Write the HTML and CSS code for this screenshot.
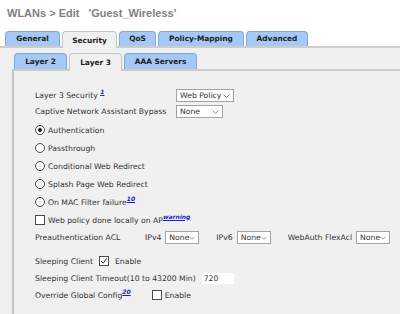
FILE: index.html
```html
<!DOCTYPE html>
<html lang="en">
<head>
    <meta charset="UTF-8">
    <title>WLANs &gt; Edit</title>
    <link rel="stylesheet" href="styles.css">
</head>
<body>
    <div class="title">WLANs &gt; Edit &nbsp;&nbsp;'Guest_Wireless'</div>

    <div class="tabs outer">
        <span class="tab t-general">General</span>
        <span class="tab t-security active">Security</span>
        <span class="tab t-qos">QoS</span>
        <span class="tab t-policy">Policy-Mapping</span>
        <span class="tab t-advanced">Advanced</span>
    </div>

    <div class="panel">
        <div class="tabs inner">
            <span class="tab t-layer">Layer 2</span>
            <span class="tab t-layer active">Layer 3</span>
            <span class="tab t-aaa">AAA Servers</span>
        </div>

        <div class="content">
            <div class="row r-sel">
                <span class="label wide">Layer 3 Security <sup class="ref">1</sup></span>
                <span class="select w-web">Web Policy <svg class="chev" width="7" height="4" viewBox="0 0 7 4"><path d="M0.5 0.5 L3.5 3.5 L6.5 0.5" fill="none" stroke="#8a8a8a"/></svg></span>
            </div>
            <div class="row r-sel">
                <span class="label wide">Captive Network Assistant Bypass</span>
                <span class="select w-none">None <svg class="chev" width="7" height="4" viewBox="0 0 7 4"><path d="M0.5 0.5 L3.5 3.5 L6.5 0.5" fill="none" stroke="#8a8a8a"/></svg></span>
            </div>

            <div class="row r-opt first">
                <span class="radio on"></span>
                <span>Authentication</span>
            </div>
            <div class="row r-opt">
                <span class="radio"></span>
                <span>Passthrough</span>
            </div>
            <div class="row r-opt">
                <span class="radio"></span>
                <span>Conditional Web Redirect</span>
            </div>
            <div class="row r-opt">
                <span class="radio"></span>
                <span>Splash Page Web Redirect</span>
            </div>
            <div class="row r-opt">
                <span class="radio"></span>
                <span>On MAC Filter failure<sup class="ref">10</sup></span>
            </div>
            <div class="row r-opt">
                <span class="check"></span>
                <span>Web policy done locally on AP<sup class="ref">warning</sup></span>
            </div>

            <div class="row r-sel acl">
                <span class="label acl-label">Preauthentication ACL</span>
                <span class="acl-name">IPv4</span>
                <span class="select w-acl">None <svg class="chev" width="7" height="4" viewBox="0 0 7 4"><path d="M0.5 0.5 L3.5 3.5 L6.5 0.5" fill="none" stroke="#8a8a8a"/></svg></span>
                <span class="acl-name gap">IPv6</span>
                <span class="select w-acl">None <svg class="chev" width="7" height="4" viewBox="0 0 7 4"><path d="M0.5 0.5 L3.5 3.5 L6.5 0.5" fill="none" stroke="#8a8a8a"/></svg></span>
                <span class="acl-name gap">WebAuth FlexAcl</span>
                <span class="select w-acl">None <svg class="chev" width="7" height="4" viewBox="0 0 7 4"><path d="M0.5 0.5 L3.5 3.5 L6.5 0.5" fill="none" stroke="#8a8a8a"/></svg></span>
            </div>

            <div class="row r-opt sleep">
                <span class="label">Sleeping Client</span>
                <span class="check on"><svg width="8" height="8" viewBox="0 0 8 8"><path d="M1.2 4.2 L3.2 6.2 L6.8 1.4" fill="none" stroke="#333" stroke-width="1"/></svg></span>
                <span>Enable</span>
            </div>
            <div class="row r-sel">
                <span class="label">Sleeping Client Timeout(10 to 43200 Min)</span>
                <span class="textbox">720</span>
            </div>
            <div class="row r-opt">
                <span class="label">Override Global Config<sup class="ref">20</sup></span>
                <span class="check override"></span>
                <span>Enable</span>
            </div>
        </div>
    </div>
</body>
</html>
```

FILE: styles.css
```css
body {
    margin: 0;
    background: white;
    font-family: "DejaVu Sans", Verdana, sans-serif;
    font-size: 7.7px;
    color: #333;
}
.title {
    height: 31px;
    line-height: 26px;
    padding-left: 7px;
    font-family: "Liberation Sans", Arial, sans-serif;
    font-size: 11px;
    font-weight: bold;
    color: #7f7f7f;
    white-space: pre;
}
.tabs {
    display: flex;
    gap: 2px;
    align-items: flex-end;
}
.tabs.outer {
    padding-left: 5px;
    border-bottom: 2px solid #cdcdcd;
}
.tab {
    box-sizing: border-box;
    height: 15px;
    line-height: 14px;
    text-align: center;
    border: 1px solid #7ea8e2;
    border-bottom: none;
    border-radius: 4px 4px 0 0;
    background: #a6c8f4;
    font-weight: bold;
    font-size: 7.4px;
    color: #1c1c1c;
}
.tab.active {
    height: 17px;
    line-height: 17px;
    margin-bottom: -2px;
    background: #f0f0f0;
    border-color: #c6c6c6;
}
.t-general,
.t-security {
    width: 55px;
}
.t-qos {
    width: 37px;
}
.t-policy {
    width: 86px;
}
.t-advanced {
    width: 62px;
}
.t-layer {
    width: 53px;
}
.t-aaa {
    width: 73px;
}
.panel {
    background: #f0f0f0;
    padding: 5px 0 0 12px;
    height: 266px;
}
.tabs.inner {
    padding-left: 2px;
}
.tabs.inner .tab {
    height: 16px;
    line-height: 16px;
}
.tabs.inner .tab.active {
    height: 18px;
    line-height: 18px;
}
.content {
    border-top: 2px solid #cccccc;
    border-left: 2px solid #c4c4c4;
    padding: 16px 0 0 21px;
    height: 230px;
}
.row {
    display: flex;
    align-items: center;
    white-space: nowrap;
}
.r-sel {
    height: 16px;
}
.r-opt {
    height: 18px;
}
.r-opt.first {
    margin-top: 2px;
}
.label.wide {
    width: 141px;
}
.ref {
    font-size: 6px;
    font-weight: bold;
    font-style: italic;
    color: #1a1ad0;
    text-decoration: underline;
    vertical-align: 4px;
    line-height: 0;
}
.select {
    display: flex;
    align-items: center;
    justify-content: space-between;
    box-sizing: border-box;
    height: 13px;
    padding: 0 3px 0 3px;
    background: white;
    border: 1px solid #a3a3a3;
}
.chev {
    margin-top: 1px;
}
.w-web {
    width: 58px;
}
.w-none {
    width: 47px;
}
.w-acl {
    width: 34px;
    margin-left: 4px;
}
.acl-label {
    width: 110px;
}
.acl-name.gap {
    margin-left: 17px;
}
.radio,
.check {
    box-sizing: border-box;
    width: 10px;
    height: 10px;
    margin-right: 3px;
    background: white;
    border: 1px solid #4a4a4a;
    display: flex;
    align-items: center;
    justify-content: center;
}
.radio {
    border-radius: 50%;
}
.radio.on::after {
    content: "";
    width: 4px;
    height: 4px;
    border-radius: 50%;
    background: #111;
}
.sleep {
    margin-top: 7px;
}
.sleep .check {
    margin-left: 6px;
    margin-right: 6px;
}
.textbox {
    box-sizing: border-box;
    width: 32px;
    height: 11px;
    line-height: 11px;
    margin-left: 6px;
    padding-left: 2px;
    background: white;
}
.check.override {
    margin-left: 21px;
}
```
